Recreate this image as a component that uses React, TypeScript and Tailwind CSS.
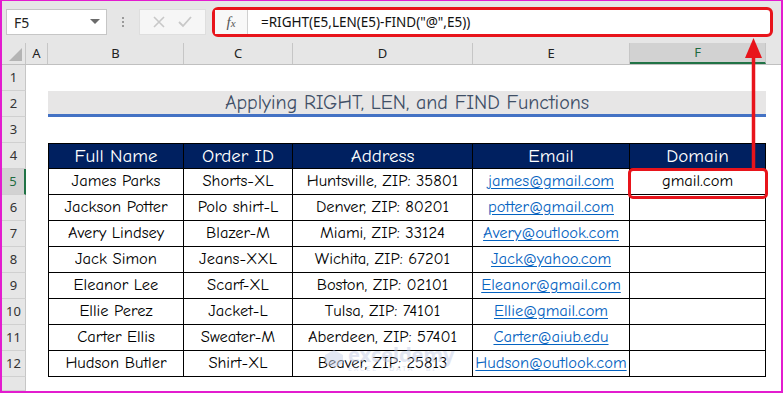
import React from "react";

const rows = [
  ["James Parks", "Shorts-XL", "Huntsville, ZIP: 35801", "james@gmail.com", "gmail.com"],
  ["Jackson Potter", "Polo shirt-L", "Denver, ZIP: 80201", "potter@gmail.com", ""],
  ["Avery Lindsey", "Blazer-M", "Miami, ZIP: 33124", "Avery@outlook.com", ""],
  ["Jack Simon", "Jeans-XXL", "Wichita, ZIP: 67201", "Jack@yahoo.com", ""],
  ["Eleanor Lee", "Scarf-XL", "Boston, ZIP: 02101", "Eleanor@gmail.com", ""],
  ["Ellie Perez", "Jacket-L", "Tulsa, ZIP: 74101", "Ellie@gmail.com", ""],
  ["Carter Ellis", "Sweater-M", "Aberdeen, ZIP: 57401", "Carter@aiub.edu", ""],
  ["Hudson Butler", "Shirt-XL", "Beaver, ZIP: 25813", "Hudson@outlook.com", ""],
];

const headers = ["Full Name", "Order ID", "Address", "Email", "Domain"];
const widths = ["w-[136px]", "w-[109px]", "w-[180px]", "w-[157px]", "w-[136px]"];

const comic = { fontFamily: '"Comic Sans MS", "Comic Neue", "Noto Sans", sans-serif' };

function RowHeader({ n, active }: { n?: number; active?: boolean }) {
  return (
    <div
      className={
        "w-[24px] shrink-0 flex items-center justify-center text-[13px] border-b border-[#d0d0d0] " +
        (active
          ? "bg-[#d2d2d2] text-[#1e6b3f] border-r-2 border-r-[#217346]"
          : "bg-[#e6e6e6] text-[#333] border-r border-r-[#c6c6c6]")
      }
    >
      {n}
    </div>
  );
}

function EmptyRow({ n, h = "h-[26px]" }: { n?: number; h?: string }) {
  return (
    <div className={"flex " + h}>
      <RowHeader n={n} />
      <div className="flex-1 bg-white" />
    </div>
  );
}

export default function App() {
  return (
    <div
      className="relative w-[783px] h-[393px] overflow-hidden bg-white border-[#e31ccf] border-l-2 border-r-2 border-b-2 border-t"
      style={{ fontFamily: '"Segoe UI", "Noto Sans", "Open Sans", sans-serif' }}
    >
      {/* Top formula bar */}
      <div className="h-[42px] bg-[#e6e6e6] flex items-start pt-[8px]">
        <div className="ml-[4px] w-[101px] h-[26px] bg-white border border-[#c6c6c6] flex items-center justify-between pl-[7px] pr-[6px]">
          <span className="text-[14px] text-[#222]">F5</span>
          <svg width="10" height="6" viewBox="0 0 10 6">
            <polygon points="0,0 10,0 5,5" fill="#6b6b6b" />
          </svg>
        </div>
        <div className="w-[32px] h-[26px] flex flex-col items-center justify-center gap-[2px]">
          <div className="w-[2px] h-[2px] bg-[#9a9a9a]" />
          <div className="w-[2px] h-[2px] bg-[#9a9a9a]" />
          <div className="w-[2px] h-[2px] bg-[#9a9a9a]" />
        </div>
        <div className="w-[67px] h-[26px] bg-[#f6f6f6] border border-[#dedede] flex items-center justify-around px-[6px]">
          <svg width="12" height="12" viewBox="0 0 12 12">
            <path d="M1 1 L11 11 M11 1 L1 11" stroke="#c8c8c8" strokeWidth="1.6" />
          </svg>
          <svg width="14" height="12" viewBox="0 0 14 12">
            <path d="M1 6 L5 10 L13 1" stroke="#c8c8c8" strokeWidth="1.8" fill="none" />
          </svg>
        </div>
        <div className="ml-[6px] -mt-[2px] w-[561px] h-[30px] border-[3px] border-[#e8141b] rounded-[6px] flex bg-white">
          <div className="w-[33px] h-full bg-[#f8f8f8] border-r border-[#d0d0d0] flex items-center justify-center">
            <span className="text-[15px] italic text-[#555]" style={{ fontFamily: '"Liberation Serif", serif' }}>
              f<span className="text-[11px]">x</span>
            </span>
          </div>
          <div className="flex-1 flex items-center pl-[13px] text-[13.5px] text-[#111]">
            =RIGHT(E5,LEN(E5)-FIND("@",E5))
          </div>
        </div>
      </div>

      {/* Column headers */}
      <div className="flex h-[22px] bg-[#e6e6e6] border-b border-[#c0c0c0] text-[13px] text-[#222]">
        <div className="w-[24px] shrink-0 border-r border-[#c6c6c6] flex items-end justify-end pr-[3px] pb-[3px]">
          <svg width="13" height="13" viewBox="0 0 13 13">
            <polygon points="13,0 13,13 0,13" fill="#b4b4b4" />
          </svg>
        </div>
        <div className="w-[22px] shrink-0 border-r border-[#c6c6c6] flex items-center justify-center">A</div>
        <div className="w-[136px] shrink-0 border-r border-[#c6c6c6] flex items-center justify-center">B</div>
        <div className="w-[109px] shrink-0 border-r border-[#c6c6c6] flex items-center justify-center">C</div>
        <div className="w-[180px] shrink-0 border-r border-[#c6c6c6] flex items-center justify-center">D</div>
        <div className="w-[157px] shrink-0 border-r border-[#c6c6c6] flex items-center justify-center">E</div>
        <div className="w-[136px] shrink-0 bg-[#d2d2d2] border-b-2 border-[#217346] border-r border-r-[#c6c6c6] flex items-center justify-center text-[#1e6b3f]">
          F
        </div>
        <div className="flex-1 bg-[#e6e6e6]" />
      </div>

      {/* Row 1 */}
      <EmptyRow n={1} />

      {/* Row 2 title */}
      <div className="flex h-[26px]">
        <RowHeader n={2} />
        <div className="w-[22px] shrink-0" />
        <div
          className="w-[718px] shrink-0 bg-[#e7e6e6] border-b-[3px] border-[#4472c4] flex items-center justify-center text-[20px] text-[#3f4f66]"
          style={comic}
        >
          Applying RIGHT, LEN, and FIND Functions
        </div>
        <div className="flex-1" />
      </div>

      {/* Row 3 */}
      <EmptyRow n={3} />

      {/* Row 4 header */}
      <div className="flex h-[26px]">
        <RowHeader n={4} />
        <div className="w-[22px] shrink-0" />
        {headers.map((h, i) => (
          <div
            key={h}
            className={
              widths[i] +
              " shrink-0 bg-[#002060] text-white text-[19px] flex items-center justify-center border-t border-b border-r border-black" +
              (i === 0 ? " border-l" : "")
            }
            style={comic}
          >
            {h}
          </div>
        ))}
        <div className="flex-1" />
      </div>

      {/* Data rows */}
      {rows.map((r, ri) => (
        <div key={ri} className="flex h-[26px]">
          <RowHeader n={ri + 5} active={ri === 0} />
          <div className="w-[22px] shrink-0" />
          {r.map((c, ci) => (
            <div
              key={ci}
              className={
                widths[ci] +
                " shrink-0 flex items-center justify-center text-[16.5px] border-b border-r border-black" +
                (ci === 0 ? " border-l" : "") +
                (ci === 3 ? " text-[#0563c1] underline underline-offset-2" : " text-black")
              }
              style={comic}
            >
              {c}
            </div>
          ))}
          <div className="flex-1" />
        </div>
      ))}

      {/* Row 13 partial */}
      <EmptyRow h="h-[14px]" />

      {/* Watermark */}
      <div className="absolute left-[322px] top-[344px] flex items-center gap-[4px] opacity-50 pointer-events-none">
        <svg width="20" height="20" viewBox="0 0 20 20">
          <polygon points="10,1 19,6 19,14 10,19 1,14 1,6" fill="#c9d3ea" />
        </svg>
        <div className="flex flex-col leading-none">
          <span className="text-[20px] font-bold text-[#c4cde6]" style={{ fontFamily: '"Noto Sans", sans-serif' }}>
            exceldemy
          </span>
          <span className="text-[7px] tracking-[2px] text-[#c4cde6]">EXCEL · DATA · BI</span>
        </div>
      </div>

      {/* F5 highlight box */}
      <div className="absolute left-[626px] top-[167px] w-[140px] h-[31px] border-[3px] border-[#e8141b] rounded-[5px] pointer-events-none" />

      {/* Arrow */}
      <svg className="absolute left-0 top-0 pointer-events-none" width="783" height="393">
        <line x1="751.5" y1="54" x2="751.5" y2="168" stroke="#e8141b" strokeWidth="3.5" />
        <polygon points="743,57 760,57 751.5,37" fill="#e8141b" />
      </svg>
    </div>
  );
}
